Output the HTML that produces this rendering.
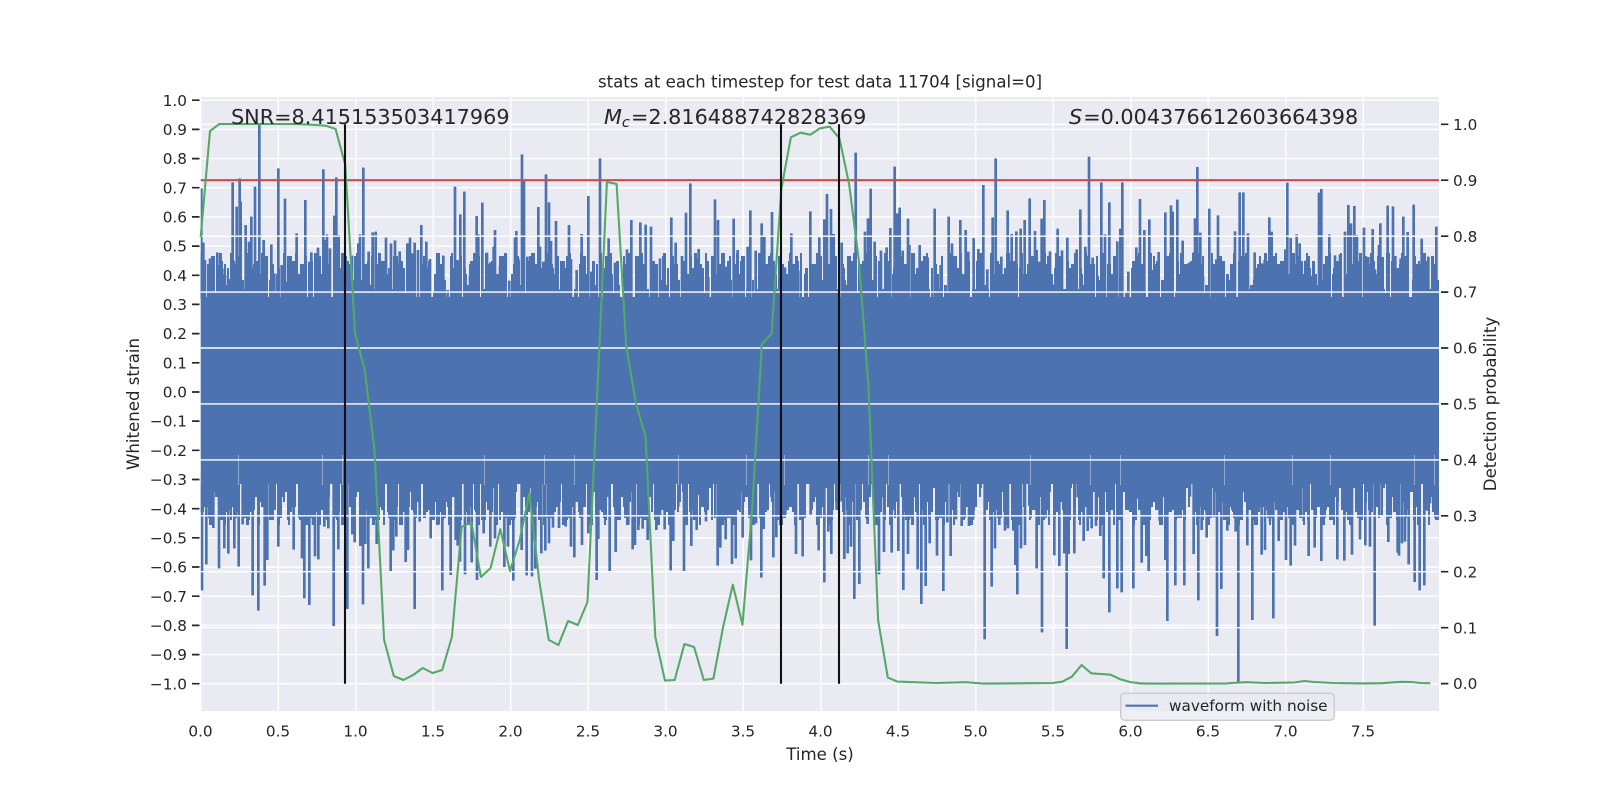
<!DOCTYPE html>
<html><head><meta charset="utf-8"><title>stats</title>
<style>html,body{margin:0;padding:0;background:#fff;width:1600px;height:800px;overflow:hidden}svg{display:block}text{font-family:"DejaVu Sans","Liberation Sans",sans-serif;fill:#262626}</style></head>
<body>
<svg width="1600" height="800" viewBox="0 0 1600 800" xmlns="http://www.w3.org/2000/svg">
<defs><clipPath id="ax"><rect x="200.7" y="97" width="1238.3" height="614"/></clipPath></defs>
<rect x="200.7" y="97" width="1238.3" height="614" fill="#eaeaf2"/>
<g stroke="#fff" stroke-width="1.4" fill="none">
<path d="M200.7 100.2H1439M200.7 129.4H1439M200.7 158.6H1439M200.7 187.7H1439M200.7 216.9H1439M200.7 246.1H1439M200.7 275.3H1439M200.7 304.4H1439M200.7 333.6H1439M200.7 362.8H1439M200.7 392H1439M200.7 421.1H1439M200.7 450.3H1439M200.7 479.5H1439M200.7 508.7H1439M200.7 537.8H1439M200.7 567H1439M200.7 596.2H1439M200.7 625.4H1439M200.7 654.6H1439M200.7 683.7H1439"/>
<path d="M200.7 97V711M278.3 97V711M355.8 97V711M433.3 97V711M510.8 97V711M588.3 97V711M665.8 97V711M743.3 97V711M820.8 97V711M898.3 97V711M975.8 97V711M1053.3 97V711M1130.8 97V711M1208.3 97V711M1285.8 97V711M1363.3 97V711"/>
</g>
<g clip-path="url(#ax)" fill="none" stroke="#4c72b0">
<rect x="200" y="297" width="1240" height="187" fill="#4c72b0" stroke="none"/>
<g>
<path d="M200 295.5H1440" stroke-width="5" stroke-dasharray="3 11 2 9 4 15 2 7 3 19 2 13"/>
<path d="M200 293.5H1440" stroke-width="9" stroke-dasharray="2 8 3 17 2 12 5 10 2 21 3 6"/>
<path d="M200 291.5H1440" stroke-width="13" stroke-dasharray="4 13 2 6 3 10 2 18 3 9 5 23"/>
<path d="M200 289H1440" stroke-width="18" stroke-dasharray="2 14 4 8 2 11 3 16 2 7 3 20"/>
<path d="M200 286H1440" stroke-width="24" stroke-dasharray="3 7 2 19 4 12 2 9 3 15 2 10"/>
<path d="M200 283H1440" stroke-width="30" stroke-dasharray="2 10 3 12 2 22 4 7 2 13 3 8"/>
<path d="M200 279.5H1440" stroke-width="37" stroke-dasharray="5 16 2 9 3 13 2 6 3 18 2 11"/>
<path d="M200 275.5H1440" stroke-width="45" stroke-dasharray="2 17 3 8 2 14 4 11 2 20 3 9"/>
<path d="M200 281H1440" stroke-width="34" stroke-dashoffset="23" stroke-dasharray="4 9 3 14 6 11 2 8 3 16 5 12"/>
<path d="M200 277H1440" stroke-width="42" stroke-dashoffset="41" stroke-dasharray="3 19 5 13 2 10 4 23 3 7 2 15"/>
</g>
<g>
<path d="M200 486H1440" stroke-width="4" stroke-dashoffset="31" stroke-dasharray="3 11 2 9 4 15 2 7 3 19 2 13"/>
<path d="M200 488H1440" stroke-width="8" stroke-dashoffset="17" stroke-dasharray="2 8 3 17 2 12 5 10 2 21 3 6"/>
<path d="M200 490.5H1440" stroke-width="13" stroke-dashoffset="43" stroke-dasharray="4 13 2 6 3 10 2 18 3 9 5 23"/>
<path d="M200 493H1440" stroke-width="18" stroke-dashoffset="9" stroke-dasharray="2 14 4 8 2 11 3 16 2 7 3 20"/>
<path d="M200 495.5H1440" stroke-width="23" stroke-dashoffset="27" stroke-dasharray="3 7 2 19 4 12 2 9 3 15 2 10"/>
<path d="M200 498H1440" stroke-width="28" stroke-dashoffset="51" stroke-dasharray="2 10 3 12 2 22 4 7 2 13 3 8"/>
<path d="M200 501H1440" stroke-width="34" stroke-dashoffset="13" stroke-dasharray="5 16 2 9 3 13 2 6 3 18 2 11"/>
<path d="M200 504.5H1440" stroke-width="41" stroke-dashoffset="37" stroke-dasharray="2 17 3 8 2 14 4 11 2 20 3 9"/>
<path d="M200 497H1440" stroke-width="26" stroke-dashoffset="5" stroke-dasharray="4 9 3 14 6 11 2 8 3 16 5 12"/>
<path d="M200 502H1440" stroke-width="36" stroke-dashoffset="59" stroke-dasharray="3 19 5 13 2 10 4 23 3 7 2 15"/>
</g>
<g stroke-width="8">
<path transform="translate(180 60) scale(.33333)" d="M64 385V720M70 548V720M75 600V720M90 595V720M95 603V720M112 577V720M120 615V720M127 625V720M135 643V720M150 657V720M158 367V720M170 440V720M179 355V720M182 425V720M197 495V720M207 545V720M214 470V720M225 380V720M232 610V720M238 195V720M251 540V720M274 553V720M295 325V720M283 640V720M305 615V720M315 416V720M320 665V720M350 520V720M356 645V720M367 613V720M376 420V720M388 605V720M394 577V720M408 610V720M414 563V720M430 328V720M437 540V720M441 523V720M450 565V720M463 467V720M469 352V720M476 525V720M516 587V720M535 550V720M540 523V720M550 323V720M566 575V720M578 517V720M587 515V720M603 637V720M618 533V720M633 550V720M645 541V720M652 610V720M659 574V720M682 550V720M690 533V720M697 580V720M704 548V720M714 570V720M724 495V720M739 545V720M750 597V720M775 635V720M790 587V720M803 690V720M825 380V720M832 600V720M841 463V720M853 395V720M870 645V720M890 468V720M895 523V720M907 428V720M921 578V720M931 607V720M941 560V720M945 510V720M960 617V720M975 635V720M988 662V720M1005 533V720M1009 513V720M1015 595V720M1026 283V720M1032 360V720M1042 590V720M1058 615V720M1075 441V720M1080 560V720M1090 605V720M1098 343V720M1107 427V720M1113 543V720M1128 483V720M1140 688V720M1167 495V720M1173 597V720M1190 630V720"/>
<path transform="translate(580 130) scale(.33333)" d="M5 312V510M25 198V510M34 425V510M60 85V510M86 325V510M105 398V510M141 358V510M154 270V510M181 277V510M197 284V510M213 290V510M240 385V510M274 262V510M287 338V510M306 378V510M318 248V510M331 160V510M348 385V510M356 357V510M385 442V510M405 208V510M414 270V510M438 410V510M461 266V510M473 360V510M503 350V510M511 241V510M527 362V510M545 280V510M553 317V510M576 246V510M615 412V510M634 310V510M662 422V510M680 436V510M691 244V510M718 322V510M733 268V510M741 192V510M753 237V510M761 312V510M785 338V510M806 442V510M827 68V510M855 305V510M864 265V510M872 176V510M884 335V510M903 362V510M920 352V510M931 294V510M944 110V510M952 250V510M959 233V510M968 362V510M984 266V510M988 345V510M1019 345V510M1043 382V510M1064 236V510M1082 405V510M1106 260V510M1116 340V510M1141 270V510M1157 300V510M1165 365V510M1181 324V510M1195 357V510M1210 165V510M1222 418V510M1238 262V510M1247 85V510M1264 380V510M1283 241V510"/>
<path transform="translate(1010 130) scale(.33333)" d="M5 312V510M19 304V510M32 296V510M44 270V510M59 205V510M65 395V510M75 303V510M80 360V510M87 395V510M95 266V510M103 210V510M120 364V510M133 463V510M143 296V510M156 361V510M172 323V510M187 413V510M200 358V510M211 238V510M226 350V510M237 80V510M248 383V510M263 437V510M274 157V510M285 313V510M298 217V510M322 334V510M331 296V510M337 157V510M355 425V510M379 352V510M390 207V510M403 300V510M418 268V510M425 420V510M446 366V510M466 247V510M483 226V510M488 245V510M502 209V510M518 332V510M537 398V510M550 368V510M555 265V510M562 111V510M571 308V510M579 437V510M598 236V510M608 432V510M624 256V510M619 388V510M663 462V510M675 304V510M689 187V510M700 187V510M714 310V510M734 367V510M748 460V510M757 400V510M764 390V510M778 262V510M785 305V510M793 394V510M807 430V510M813 418V510M826 358V510M832 158V510M842 324V510M848 375V510M860 313V510M869 340V510M886 392V510M893 407V510M907 437V510M927 188V510M934 177V510M951 417V510M958 313V510M975 376V510M990 373V510M1005 305V510M1015 225V510M1023 280V510M1033 228V510M1041 315V510M1062 293V510M1075 381V510M1088 297V510M1095 418V510M1107 345V510M1111 280V510M1118 381V510M1133 227V510M1149 229V510M1156 378V510M1172 385V510M1180 260V510M1193 306V510M1211 224V510M1222 423V510M1235 326V510M1245 410V510M1255 380V510M1279 290V510"/>
<path transform="translate(180 440) scale(.33333)" d="M66 451V90M70 155V90M79 373V90M89 190V90M100 264V90M117 385V90M133 325V90M145 341V90M163 325V90M176 380V90M188 253V90M218 466V90M235 512V90M254 437V90M262 360V90M295 320V90M341 329V90M366 355V90M373 475V90M388 495V90M399 255V90M405 349V90M415 358V90M433 260V90M445 265V90M461 558V90M475 328V90M502 507V90M517 283V90M524 307V90M541 318V90M549 493V90M556 312V90M565 385V90M590 312V90M632 394V90M640 331V90M649 290V90M677 366V90M684 330V90M704 507V90M719 245V90M752 295V90M776 253V90M787 451V90M812 405V90M827 300V90M833 317V90M840 365V90M855 403V90M875 367V90M891 420V90M911 280V90M931 320V90M945 295V90M973 381V90M984 320V90M1000 422V90M1025 330V90M1040 406V90M1056 409V90M1066 386V90M1084 340V90M1096 332V90M1107 310V90M1119 263V90M1137 264V90M1157 260V90M1173 320V90M1183 352V90"/>
<path transform="translate(580 480) scale(.33333)" d="M6 195V-30M25 160V-30M50 300V-30M55 177V-30M72 77V-30M89 274V-30M107 216V-30M119 104V-30M145 133V-30M158 208V-30M165 195V-30M175 150V-30M188 146V-30M203 180V-30M229 150V-30M240 105V-30M254 148V-30M272 271V-30M280 183V-30M295 80V-30M312 274V-30M334 198V-30M350 150V-30M358 45V-30M378 124V-30M413 257V-30M421 203V-30M437 178V-30M456 252V-30M467 235V-30M488 173V-30M513 241V-30M528 130V-30M544 293V-30M551 147V-30M580 232V-30M589 172V-30M616 103V-30M648 222V-30M668 229V-30M692 104V-30M716 211V-30M733 307V-30M745 155V-30M754 222V-30M770 90V-30M785 65V-30M793 237V-30M803 220V-30M813 200V-30M823 357V-30M838 312V-30M863 132V-30M897 283V-30M912 216V-30M935 218V-30M955 213V-30M970 330V-30M984 222V-30M1013 268V-30M1024 372V-30M1037 318V-30M1049 190V-30M1071 227V-30M1090 333V-30M1102 127V-30M1112 228V-30M1128 118V-30M1145 138V-30M1167 138V-30M1180 115V-30M1214 478V-30M1235 320V-30M1245 205V-30M1258 135V-30M1275 152V-30M1284 145V-30"/>
<path transform="translate(1010 480) scale(.33333)" d="M10 152V-30M16 255V-30M22 343V-30M33 205V-30M45 195V-30M58 77V-30M68 88V-30M80 265V-30M96 457V-30M108 73V-30M133 226V-30M148 258V-30M163 220V-30M170 507V-30M176 222V-30M193 220V-30M203 52V-30M221 183V-30M233 153V-30M245 145V-30M258 138V-30M271 168V-30M281 295V-30M298 397V-30M322 325V-30M335 337V-30M355 65V-30M370 325V-30M382 56V-30M395 248V-30M409 228V-30M416 273V-30M431 40V-30M449 122V-30M466 240V-30M472 423V-30M496 316V-30M523 316V-30M540 50V-30M551 222V-30M565 361V-30M575 150V-30M590 173V-30M612 112V-30M621 468V-30M634 327V-30M652 152V-30M677 155V-30M685 611V-30M692 120V-30M712 196V-30M727 420V-30M740 77V-30M755 224V-30M765 210V-30M780 125V-30M790 415V-30M806 183V-30M828 240V-30M842 257V-30M855 197V-30M881 123V-30M896 228V-30M914 203V-30M934 243V-30M951 32V-30M963 120V-30M982 238V-30M1003 242V-30M1026 224V-30M1050 178V-30M1066 196V-30M1080 200V-30M1094 437V-30M1115 107V-30M1135 186V-30M1163 218V-30M1167 227V-30M1176 190V-30M1185 185V-30M1196 253V-30M1214 306V-30M1229 331V-30M1243 316V-30M1250 92V-30M1260 70V-30M1285 77V-30"/>
</g>
<path d="M200 470H1440" stroke="#eaeaf2" stroke-opacity=".45" stroke-width="30" stroke-dasharray="1 37 1 83 1 19 1 141 1 59 1 29 1 103 1 67"/>
</g>
<path d="M200.7 124.3H1439M200.7 180.2H1439M200.7 236.2H1439M200.7 292.1H1439M200.7 348H1439M200.7 403.9H1439M200.7 459.9H1439M200.7 515.8H1439M200.7 571.7H1439M200.7 627.7H1439M200.7 683.6H1439" stroke="#fff" stroke-width="1.4" fill="none"/>
<path d="M200.7 180.2H1439" stroke="#c44e52" stroke-width="2.08" fill="none"/>
<polyline fill="none" stroke="#55a868" stroke-width="2.08" stroke-linejoin="round" points="200.7,237 210,131 219.4,124 229.1,124 238.8,124 248.4,124 258.1,124 267.8,124 277.5,124 287.2,124 296.9,124 306.6,124.5 316.3,125 325.9,125.7 335.6,129 345.3,165 355,333 364.7,370 374.4,449 384.1,640 393.8,676 403.4,680 413.1,675 422.8,668 432.5,673 442.2,670 451.9,637 461.6,527 471.3,522 480.9,577 490.6,568 500.3,529 510,571 519.7,540 529.4,493 539.1,580 548.8,640 558.4,645 568.1,621 577.8,625 587.5,602 597.2,395 606.9,182 616.6,184 626.3,347 635.9,403 645.6,437 655.3,637 665,680.6 674.7,680 684.4,644 694.1,647 703.8,680 713.4,678.6 723.1,627 732.8,584.7 742.5,624.7 752.2,508 761.9,344 771.6,333.7 781.3,189 790.9,137.3 800.6,132.7 810.3,134.7 820,128.3 829.7,126.7 839.4,138.3 849.1,184 858.8,260 868.4,385 878.1,620 887.8,677.6 897.5,681.6 936.3,683 965.3,682.2 984.7,683.6 1052.5,683 1062.2,681.7 1071.9,676.7 1081.6,665 1091.3,673.3 1100.9,674 1110.6,674.7 1120.3,679.3 1130,682 1139.7,683.3 1149.4,683.6 1226.9,683.4 1236.6,682.7 1246.3,682.2 1265.6,683 1294.7,682.4 1304.4,681 1314.1,682 1333.4,683 1362.5,683.4 1381.9,683.2 1401.3,681.8 1411,682 1420.6,683 1430.3,683.2"/>
<path d="M345 124.3V683.7M781 124.3V683.7M839 124.3V683.7" stroke="#111" stroke-width="2.08" fill="none"/>
<path d="M192 100.2H199.5M192 129.4H199.5M192 158.6H199.5M192 187.7H199.5M192 216.9H199.5M192 246.1H199.5M192 275.3H199.5M192 304.4H199.5M192 333.6H199.5M192 362.8H199.5M192 392H199.5M192 421.1H199.5M192 450.3H199.5M192 479.5H199.5M192 508.7H199.5M192 537.8H199.5M192 567H199.5M192 596.2H199.5M192 625.4H199.5M192 654.6H199.5M192 683.7H199.5M1441 124.3H1448.3M1441 180.2H1448.3M1441 236.2H1448.3M1441 292.1H1448.3M1441 348H1448.3M1441 403.9H1448.3M1441 459.9H1448.3M1441 515.8H1448.3M1441 571.7H1448.3M1441 627.7H1448.3M1441 683.6H1448.3" stroke="#262626" stroke-width="1.7" fill="none"/>
<g font-size="15.28" text-anchor="end">
<text x="187" y="105.8">1.0</text><text x="187" y="135">0.9</text><text x="187" y="164.2">0.8</text><text x="187" y="193.3">0.7</text><text x="187" y="222.5">0.6</text><text x="187" y="251.7">0.5</text><text x="187" y="280.9">0.4</text><text x="187" y="310">0.3</text><text x="187" y="339.2">0.2</text><text x="187" y="368.4">0.1</text><text x="187" y="397.6">0.0</text><text x="187" y="426.7">−0.1</text><text x="187" y="455.9">−0.2</text><text x="187" y="485.1">−0.3</text><text x="187" y="514.3">−0.4</text><text x="187" y="543.4">−0.5</text><text x="187" y="572.6">−0.6</text><text x="187" y="601.8">−0.7</text><text x="187" y="631">−0.8</text><text x="187" y="660.2">−0.9</text><text x="187" y="689.3">−1.0</text>
</g>
<g font-size="15.28">
<text x="1453" y="129.9">1.0</text><text x="1453" y="185.8">0.9</text><text x="1453" y="241.8">0.8</text><text x="1453" y="297.7">0.7</text><text x="1453" y="353.6">0.6</text><text x="1453" y="409.5">0.5</text><text x="1453" y="465.5">0.4</text><text x="1453" y="521.4">0.3</text><text x="1453" y="577.3">0.2</text><text x="1453" y="633.3">0.1</text><text x="1453" y="689.2">0.0</text>
</g>
<g font-size="15.28" text-anchor="middle">
<text x="200.5" y="736.7">0.0</text><text x="278" y="736.7">0.5</text><text x="355.5" y="736.7">1.0</text><text x="433" y="736.7">1.5</text><text x="510.5" y="736.7">2.0</text><text x="588" y="736.7">2.5</text><text x="665.5" y="736.7">3.0</text><text x="743" y="736.7">3.5</text><text x="820.5" y="736.7">4.0</text><text x="898" y="736.7">4.5</text><text x="975.5" y="736.7">5.0</text><text x="1053" y="736.7">5.5</text><text x="1130.5" y="736.7">6.0</text><text x="1208" y="736.7">6.5</text><text x="1285.5" y="736.7">7.0</text><text x="1363" y="736.7">7.5</text>
</g>
<text x="820" y="87.7" font-size="16.6" text-anchor="middle">stats at each timestep for test data 11704 [signal=0]</text>
<text x="820" y="760" font-size="16.6" text-anchor="middle">Time (s)</text>
<text transform="translate(139 404) rotate(-90)" font-size="16.6" text-anchor="middle">Whitened strain</text>
<text transform="translate(1496 404) rotate(-90)" font-size="16.6" text-anchor="middle">Detection probability</text>
<g font-size="20.78">
<text x="231" y="124">SNR=8.415153503417969</text>
<text x="604" y="124"><tspan font-style="italic">M</tspan><tspan font-style="italic" font-size="14.6" dy="3">c</tspan><tspan dy="-3" dx="1">=2.816488742828369</tspan></text>
<text x="1069" y="124"><tspan font-style="italic">S</tspan><tspan dx="1">=0.004376612603664398</tspan></text>
</g>
<rect x="1120.7" y="693.3" width="213.6" height="27" rx="4" fill="#eaeaf2" fill-opacity=".8" stroke="#ccc" stroke-width="1.4"/>
<path d="M1125.5 705.7H1158" stroke="#4c72b0" stroke-width="2.08" fill="none"/>
<text x="1169" y="711" font-size="15.28">waveform with noise</text>
</svg>
</body></html>
